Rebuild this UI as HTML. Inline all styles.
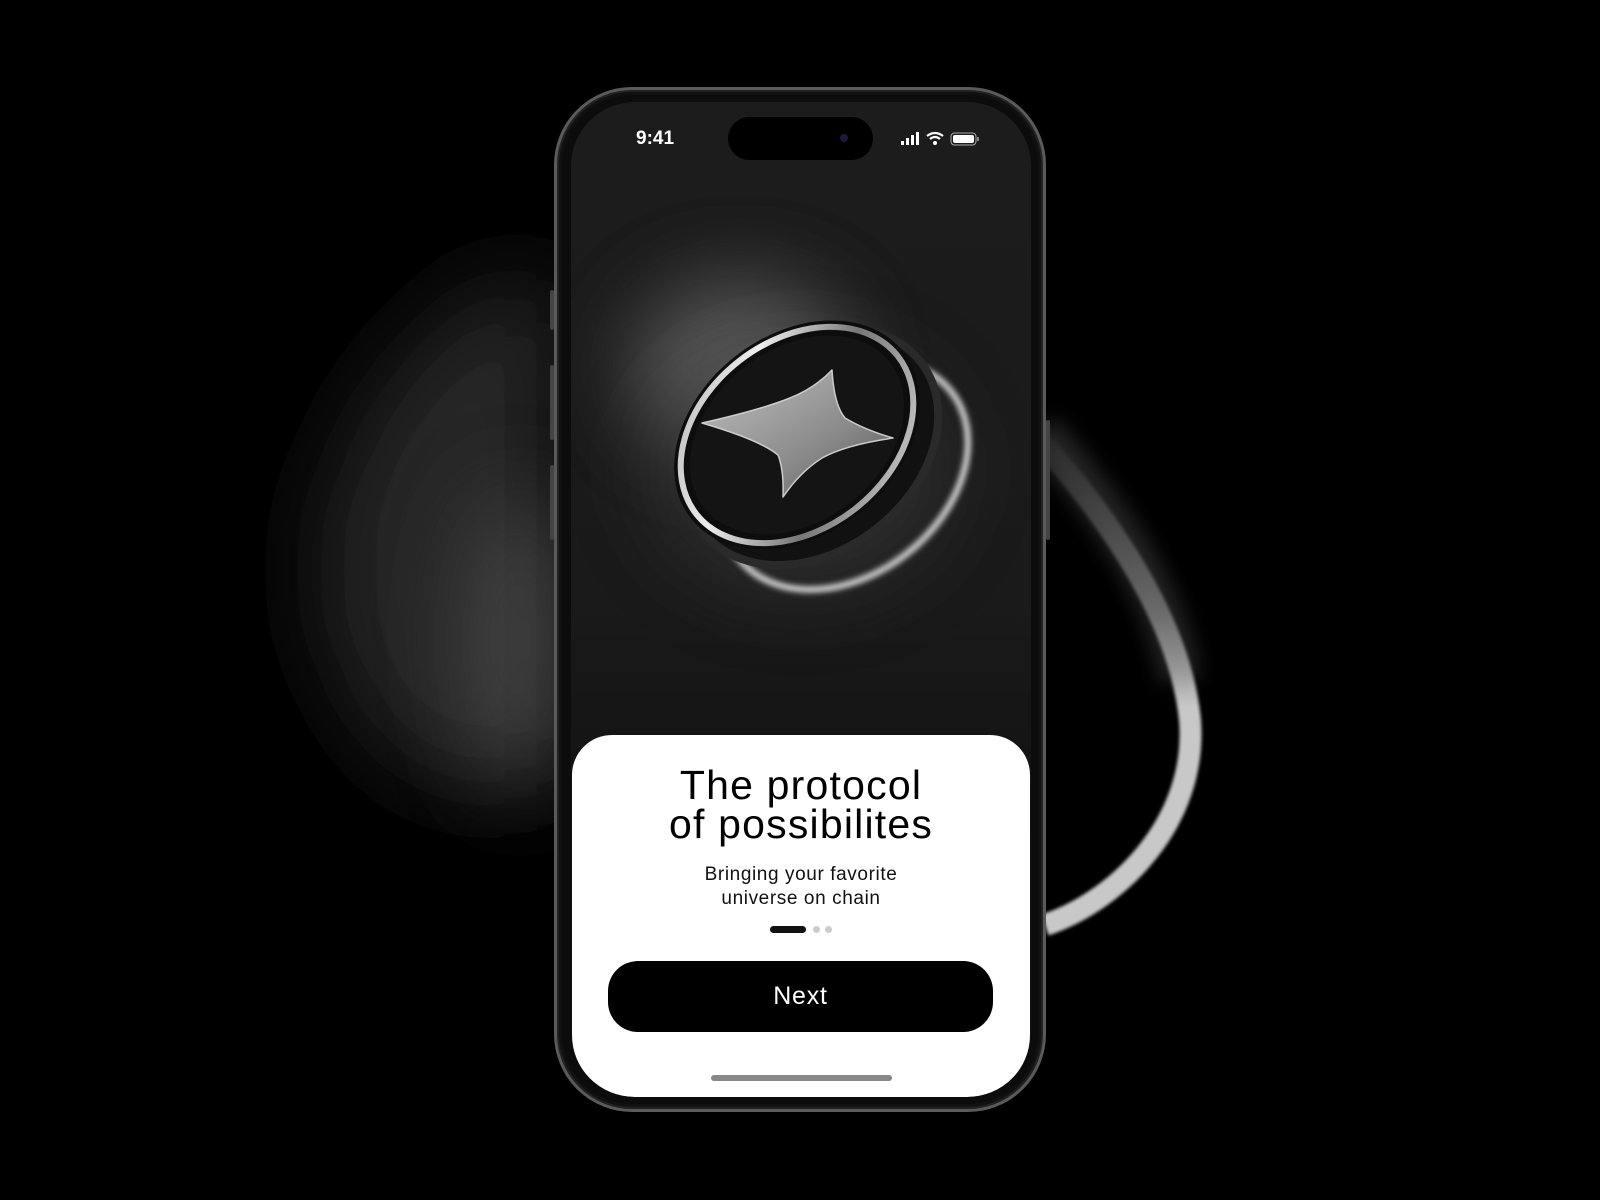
<!DOCTYPE html>
<html><head><style>
html,body{margin:0;padding:0;background:#000;}
body{width:1600px;height:1200px;position:relative;overflow:hidden;font-family:"Liberation Sans",sans-serif;}
.abs{position:absolute;}
</style></head><body>
<svg class="abs" style="left:0;top:0" width="1600" height="1200">
<defs>
<filter id="b30" x="-100%" y="-100%" width="300%" height="300%"><feGaussianBlur stdDeviation="45"/></filter>
<filter id="b8" x="-100%" y="-100%" width="300%" height="300%"><feGaussianBlur stdDeviation="10"/></filter>
<filter id="b2" x="-50%" y="-50%" width="200%" height="200%"><feGaussianBlur stdDeviation="1.5"/></filter>
<linearGradient id="arcg" x1="0" y1="0" x2="0" y2="1">
<stop offset="0" stop-color="#c8c8c8" stop-opacity="0.05"/><stop offset="0.35" stop-color="#c8c8c8" stop-opacity="0.5"/><stop offset="0.55" stop-color="#c8c8c8"/><stop offset="1" stop-color="#c8c8c8"/>
</linearGradient>
</defs>
<path d="M500 280 C 330 380 280 560 350 700 C 410 800 500 800 560 770 L560 280 Z" fill="#262626" filter="url(#b30)"/>
<ellipse cx="520" cy="640" rx="50" ry="150" fill="#555" filter="url(#b30)" opacity="0.7"/>
<path d="M1040 440 C 1110 520 1180 620 1190 720 C 1198 820 1120 900 1045 925" fill="none" stroke="url(#arcg)" stroke-width="22" filter="url(#b2)"/>
<path d="M1040 430 C 1110 510 1170 600 1180 680" fill="none" stroke="#777" stroke-width="40" opacity="0.3" filter="url(#b8)"/>
</svg>

<div class="abs" style="left:554px;top:87px;width:492px;height:1025px;border-radius:78px;background:#0c0c0c;border:3px solid #5a5a5a;box-sizing:border-box;box-shadow:inset 0 0 0 2px #222,inset 0 0 0 5px #111;"></div>
<div class="abs" style="left:550px;top:290px;width:4px;height:40px;background:#444;border-radius:2px"></div>
<div class="abs" style="left:550px;top:365px;width:4px;height:75px;background:#444;border-radius:2px"></div>
<div class="abs" style="left:550px;top:465px;width:4px;height:75px;background:#444;border-radius:2px"></div>
<div class="abs" style="left:1046px;top:420px;width:4px;height:120px;background:#444;border-radius:2px"></div>

<div class="abs" style="left:571px;top:102px;width:460px;height:995px;border-radius:64px;overflow:hidden;background:linear-gradient(#1c1c1c,#1a1a1a 50%,#111 75%);">
<svg class="abs" style="left:0;top:0" width="460" height="995" viewBox="571 102 460 995">
<defs>
<linearGradient id="star" x1="0" y1="0" x2="1" y2="1"><stop offset="0" stop-color="#c0c0c0"/><stop offset="0.6" stop-color="#8a8a8a"/><stop offset="1" stop-color="#555"/></linearGradient>
<linearGradient id="rim" x1="0" y1="0" x2="1" y2="1"><stop offset="0" stop-color="#aaa"/><stop offset="0.3" stop-color="#eee"/><stop offset="0.6" stop-color="#777"/><stop offset="1" stop-color="#ddd"/></linearGradient>
<filter id="bb" x="-100%" y="-100%" width="300%" height="300%"><feGaussianBlur stdDeviation="40"/></filter>
<filter id="bs" x="-50%" y="-50%" width="200%" height="200%"><feGaussianBlur stdDeviation="3"/></filter>
</defs>
<ellipse cx="740" cy="370" rx="110" ry="90" fill="#666" filter="url(#bb)" opacity="0.8"/>
<ellipse cx="800" cy="470" rx="150" ry="120" fill="#3a3a3a" filter="url(#bb)" opacity="0.6"/>
<ellipse cx="845" cy="475" rx="135" ry="100" transform="rotate(-38 845 475)" fill="none" stroke="#ddd" stroke-width="6" filter="url(#bs)"/>
<ellipse cx="812" cy="447" rx="138" ry="104" transform="rotate(-38 812 447)" fill="#111" stroke="#2a2a2a" stroke-width="8"/>
<ellipse cx="797" cy="435" rx="135" ry="100" transform="rotate(-38 797 435)" fill="#0d0d0d"/>
<ellipse cx="797" cy="435" rx="128" ry="94" transform="rotate(-38 797 435)" fill="none" stroke="url(#rim)" stroke-width="6"/>
<ellipse cx="797" cy="435" rx="118" ry="86" transform="rotate(-38 797 435)" fill="#141414"/>
<path d="M702 423 Q760 410 790 398 Q815 388 832 370 Q834 405 845 418 Q865 430 893 438 Q845 445 822 458 Q800 472 783 497 Q784 470 778 455 Q760 440 702 423 Z" fill="url(#star)" stroke="#ccc" stroke-width="1.5" stroke-linejoin="round"/>
</svg>
<div class="abs" style="left:65px;top:26px;color:#fff;font-size:19px;font-weight:bold;">9:41</div>
<div class="abs" style="left:157px;top:15px;width:145px;height:43px;border-radius:22px;background:#000;"></div>
<div class="abs" style="left:269px;top:32px;width:8px;height:8px;border-radius:4px;background:#1a1a3a;"></div>
<svg class="abs" style="left:330px;top:29px" width="80" height="16">
<rect x="0" y="10" width="3" height="4" fill="#fff"/><rect x="5" y="7" width="3" height="7" fill="#fff"/><rect x="10" y="4" width="3" height="10" fill="#fff"/><rect x="15" y="1" width="3" height="13" fill="#fff"/>
<path d="M26 5 Q34 -1 42 5" stroke="#fff" stroke-width="2.2" fill="none"/><path d="M29 8 Q34 4 39 8" stroke="#fff" stroke-width="2.2" fill="none"/><circle cx="34" cy="12" r="2" fill="#fff"/>
<rect x="50" y="2" width="25" height="12" rx="3.5" fill="none" stroke="#aaa" stroke-width="1"/><rect x="52" y="4" width="21" height="8" rx="2" fill="#fff"/><rect x="76" y="6" width="2" height="4" fill="#888"/>
</svg>
<div class="abs" style="left:1px;top:633px;width:458px;height:362px;background:#fff;border-radius:40px 40px 62px 62px;">
<div class="abs" style="left:0;width:100%;top:31px;text-align:center;font-size:41px;line-height:39px;color:#000;letter-spacing:1.2px;">The protocol<br>of possibilites</div>
<div class="abs" style="left:0;width:100%;top:128px;text-align:center;font-size:19px;line-height:24px;color:#111;letter-spacing:0.6px;">Bringing your favorite<br>universe on chain</div>
<div class="abs" style="left:198px;top:191px;width:36px;height:7px;border-radius:4px;background:#111;"></div>
<div class="abs" style="left:241px;top:191px;width:7px;height:7px;border-radius:4px;background:#ccc;"></div>
<div class="abs" style="left:253px;top:191px;width:7px;height:7px;border-radius:4px;background:#ccc;"></div>
<div class="abs" style="left:36px;top:226px;width:385px;height:71px;border-radius:30px;background:#000;color:#fff;font-size:25px;line-height:71px;text-align:center;letter-spacing:0.8px;">Next</div>
<div class="abs" style="left:139px;top:340px;width:181px;height:6px;border-radius:3px;background:#888;"></div>
</div>
</div>
</body></html>
